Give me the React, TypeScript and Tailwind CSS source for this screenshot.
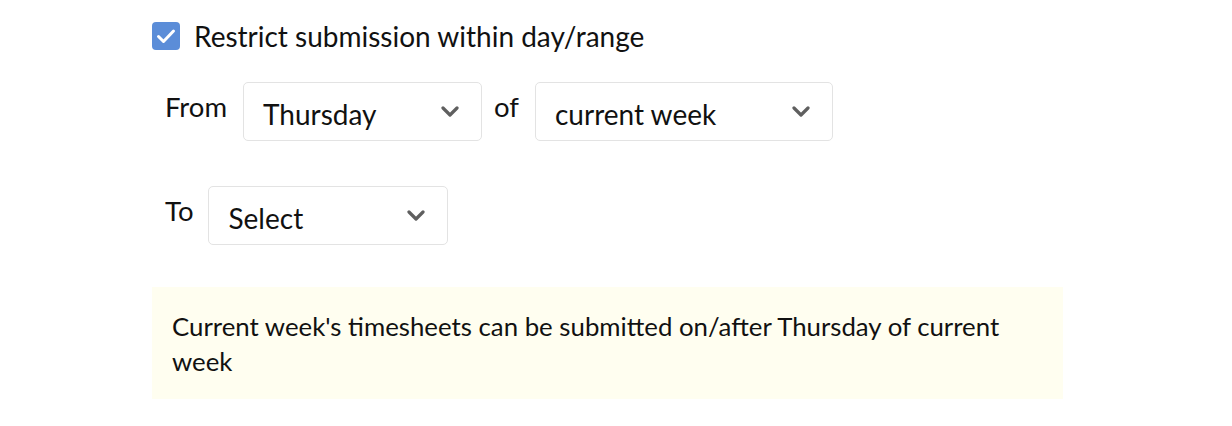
import React from 'react';

function Chevron() {
  return (
    <svg width="18" height="11" viewBox="0 0 18 11" fill="none" className="shrink-0">
      <path d="M2 2l7 7 7-7" stroke="#5f5f5f" strokeWidth="3.2" strokeLinecap="round" strokeLinejoin="round" />
    </svg>
  );
}

function SelectBox({ value, width }: { value: string; width: string }) {
  return (
    <div
      className={`${width} h-[59px] flex items-center justify-between pl-[19px] pr-[22px] border border-[#e3e3e3] rounded-[5px] bg-white text-[28px] text-[#111]`}
    >
      <span className="mt-[4px]">{value}</span>
      <Chevron />
    </div>
  );
}

export default function App() {
  return (
    <div className="w-[1232px] h-[426px] bg-white font-['Lato','Noto_Sans',sans-serif] text-[#111]">
      <div className="pl-[152px] pt-[22px] w-[1063px]">
        {/* checkbox */}
        <div className="flex items-center gap-[14px]">
          <div className="w-[28px] h-[28px] rounded-[4px] bg-[#5b8dd8] flex items-center justify-center">
            <svg width="20" height="16" viewBox="0 0 20 16" fill="none">
              <path d="M2.5 8.5l5 5L17.5 3" stroke="#fff" strokeWidth="3" strokeLinecap="round" strokeLinejoin="round" />
            </svg>
          </div>
          <span className="text-[28px] leading-[28px]">Restrict submission within day/range</span>
        </div>

        {/* From row */}
        <div className="flex items-start mt-[32px] pl-[13px]">
          <span className="text-[27.5px] leading-[59px] mt-[-5px] mr-[16px]">From</span>
          <SelectBox value="Thursday" width="w-[239px]" />
          <span className="text-[27.5px] leading-[59px] mt-[-5px] ml-[12px] mr-[16px]">of</span>
          <SelectBox value="current week" width="w-[298px]" />
        </div>

        {/* To row */}
        <div className="flex items-start mt-[45px] pl-[13px]">
          <span className="text-[27.5px] leading-[59px] mt-[-5px] mr-[15px]">To</span>
          <SelectBox value="Select" width="w-[240px]" />
        </div>

        {/* info */}
        <div className="mt-[42px] bg-[#fffef0] pl-[20px] pr-[40px] pt-[22px] pb-[20px] text-[25.8px] leading-[35px]">
          Current week's timesheets can be submitted on/after Thursday of current week
        </div>
      </div>
    </div>
  );
}
